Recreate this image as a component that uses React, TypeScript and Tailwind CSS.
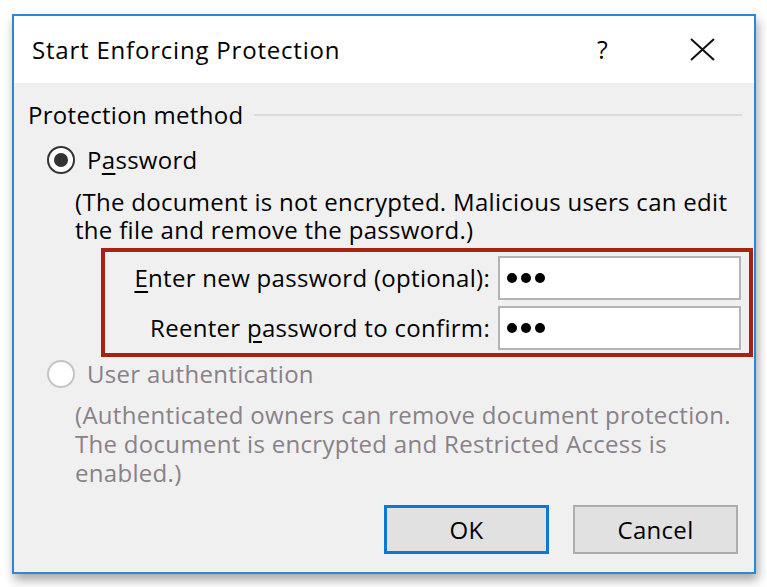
import React from "react";

function Radio({ checked, disabled }: { checked?: boolean; disabled?: boolean }) {
  return (
    <span
      className={`flex h-[28px] w-[28px] items-center justify-center rounded-full border-2 bg-white ${
        disabled ? "border-[#c4c4c4]" : "border-[#333]"
      }`}
    >
      {checked && <span className="h-[14px] w-[14px] rounded-full bg-[#333]" />}
    </span>
  );
}

function PasswordField() {
  return (
    <div className="flex h-[44px] w-[243px] items-center border-2 border-[#b4b4b4] bg-white pl-[7px]">
      <span className="flex gap-[4px]">
        <span className="h-[10px] w-[10px] rounded-full bg-black" />
        <span className="h-[10px] w-[10px] rounded-full bg-black" />
        <span className="h-[10px] w-[10px] rounded-full bg-black" />
      </span>
    </div>
  );
}

export default function App() {
  return (
    <div
      className="h-[587px] w-[767px] bg-white pl-[12px] pt-[14px] text-[24px] tracking-[0.3px] text-black"
      style={{ fontFamily: '"Open Sans", "Noto Sans", sans-serif' }}
    >
      <div className="flex h-[560px] w-[744px] flex-col border-2 border-[#2b88d8] shadow-[2px_6px_10px_rgba(0,0,0,0.35)]">
        {/* title bar */}
        <div className="flex h-[67px] items-center bg-white pl-[18px]">
          <span className="tracking-[0.8px]">Start Enforcing Protection</span>
          <span className="ml-auto text-[25px]">?</span>
          <svg className="ml-[82px] mr-[39px]" width="25" height="23" viewBox="0 0 25 23">
            <path d="M1 1 L24 22 M24 1 L1 22" stroke="#111" strokeWidth="2" fill="none" />
          </svg>
        </div>

        {/* body */}
        <div className="flex flex-1 flex-col bg-[#f0f0f0]">
          <div className="mt-[18px] flex h-[28px] items-center pl-[14px] pr-[12px]">
            <span>Protection method</span>
            <span className="ml-[11px] h-[2px] flex-1 bg-[#dcdcdc]" />
          </div>

          <div className="mt-[17px] flex h-[28px] items-center pl-[33px]">
            <Radio checked />
            <span className="ml-[12px]">
              P<span className="underline underline-offset-[4px]">a</span>ssword
            </span>
          </div>

          <div className="mt-[14px] pl-[61px] leading-[28px]">
            <div>(The document is not encrypted. Malicious users can edit</div>
            <div>the file and remove the password.)</div>
          </div>

          <div className="ml-[87px] mt-[4px] flex w-[652px] flex-col gap-[6px] border-[4px] border-[#a8230f] pb-[3px] pr-[8px] pt-[4px]">
            <div className="flex items-center justify-end gap-[8px]">
              <span>
                <span className="underline underline-offset-[4px]">E</span>nter new password (optional):
              </span>
              <PasswordField />
            </div>
            <div className="flex items-center justify-end gap-[8px]">
              <span>
                Reenter <span className="underline underline-offset-[4px]">p</span>assword to confirm:
              </span>
              <PasswordField />
            </div>
          </div>

          <div className="mt-[3px] flex h-[28px] items-center pl-[33px] text-[#8a8088]">
            <Radio disabled />
            <span className="ml-[12px]">User authentication</span>
          </div>

          <div className="mt-[12px] pl-[61px] leading-[29px] text-[#8a8088]">
            <div>(Authenticated owners can remove document protection.</div>
            <div>The document is encrypted and Restricted Access is</div>
            <div>enabled.)</div>
          </div>

          <div className="mt-auto flex justify-end gap-[24px] pb-[18px] pr-[16px]">
            <button className="flex h-[49px] w-[165px] items-center justify-center border-[3px] border-[#0a78d7] bg-[#e1e1e1]">
              OK
            </button>
            <button className="flex h-[49px] w-[165px] items-center justify-center border-2 border-[#adadad] bg-[#e1e1e1]">
              Cancel
            </button>
          </div>
        </div>
      </div>
    </div>
  );
}
